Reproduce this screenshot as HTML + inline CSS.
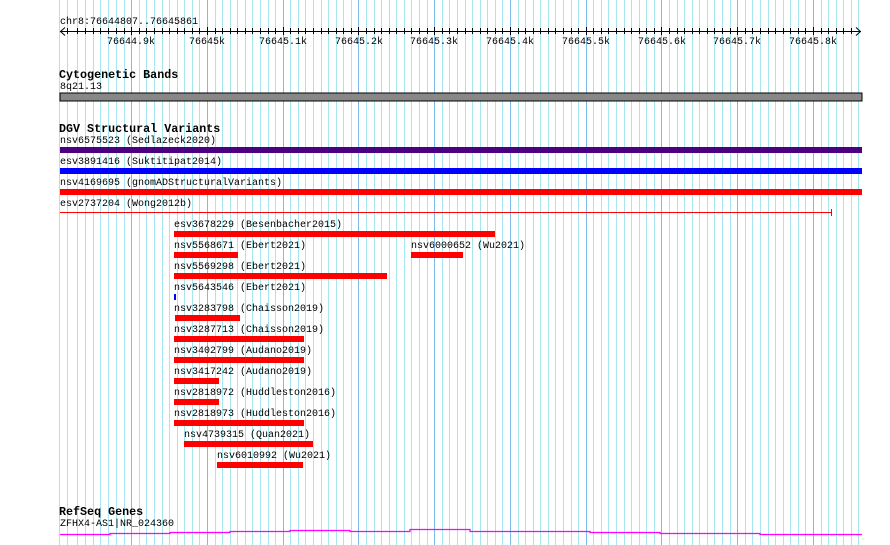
<!DOCTYPE html>
<html><head><meta charset="utf-8"><style>
body{margin:0;width:890px;height:545px;overflow:hidden;background:#fff;position:relative;font-family:"Liberation Mono",monospace;}
.t{position:absolute;font-size:10px;line-height:10px;color:#000;white-space:pre;margin-top:2px;}
.h{position:absolute;font-size:11.7px;line-height:12px;font-weight:bold;color:#000;white-space:pre;margin-top:1px;}
.b{position:absolute;height:6px;background:#f00;}
svg{position:absolute;left:0;top:0;}
</style></head><body>
<svg width="890" height="545">
<line x1="59.5" y1="0" x2="59.5" y2="545" stroke="#a6e6ee"/>
</svg>
<svg width="890" height="545" id="g2">
<g stroke="#a6e6ee" stroke-width="1">
<path d="M67.5 0V545M77.5 0V545M85.5 0V545M93.5 0V545M100.5 0V545M108.5 0V545M116.5 0V545M124.5 0V545"/>
</g>
</svg>
<script>
(function(){
var s=document.getElementById('g2');var ns='http://www.w3.org/2000/svg';
for(var k=0;k<=96;k++){var x=Math.round(131.2+k*7.575)+0.5;if(x>860)break;
var l=document.createElementNS(ns,'line');l.setAttribute('x1',x);l.setAttribute('x2',x);l.setAttribute('y1',0);l.setAttribute('y2',545);
l.setAttribute('stroke',k%10==0?'#7cbce8':'#a6e6ee');s.appendChild(l);
if(x<858){var t=document.createElementNS(ns,'line');t.setAttribute('x1',x);t.setAttribute('x2',x);t.setAttribute('y1',k%10==0?27:28);t.setAttribute('y2',k%10==0?35:34);t.setAttribute('stroke','#000');s.appendChild(t);}
}
var xs=[67.5,77.5,85.5,93.5,100.5,108.5,116.5,124.5];
xs.forEach(function(x){var t=document.createElementNS(ns,'line');t.setAttribute('x1',x);t.setAttribute('x2',x);t.setAttribute('y1',28);t.setAttribute('y2',34);t.setAttribute('stroke','#000');s.appendChild(t);});
})();
</script>
<svg width="890" height="545">
<line x1="60" y1="31.5" x2="861" y2="31.5" stroke="#000"/>
<path d="M65 27.5L60.5 31.5L65 35.5M856 27.5L860.5 31.5L856 35.5" fill="none" stroke="#000"/>
<rect x="60" y="93" width="802" height="8" fill="#888" stroke="#000" stroke-width="1"/>
<line x1="60" y1="212.5" x2="831" y2="212.5" stroke="#f00"/>
<line x1="831.5" y1="209" x2="831.5" y2="216" stroke="#f00"/>
<polyline points="60,534.5 110,534.5 110,533.5 170,533.5 170,532.5 230,532.5 230,531.5 290,531.5 290,530.5 350,530.5 350,531.5 410,531.5 410,529.5 470,529.5 470,531.5 590,531.5 590,532.5 660,532.5 660,533.5 760,533.5 760,534.5 862,534.5" fill="none" stroke="#f0f" stroke-width="1.3"/>
</svg>
<div class="t" style="left:60px;top:16px">chr8:76644807..76645861</div>
<div class="t" style="left:107px;top:36px">76644.9k</div>
<div class="t" style="left:189px;top:36px">76645k</div>
<div class="t" style="left:259px;top:36px">76645.1k</div>
<div class="t" style="left:335px;top:36px">76645.2k</div>
<div class="t" style="left:410px;top:36px">76645.3k</div>
<div class="t" style="left:486px;top:36px">76645.4k</div>
<div class="t" style="left:562px;top:36px">76645.5k</div>
<div class="t" style="left:638px;top:36px">76645.6k</div>
<div class="t" style="left:713px;top:36px">76645.7k</div>
<div class="t" style="left:789px;top:36px">76645.8k</div>
<div class="h" style="left:59px;top:68px">Cytogenetic Bands</div>
<div class="t" style="left:60px;top:81px">8q21.13</div>
<div class="h" style="left:59px;top:122px">DGV Structural Variants</div>
<div class="t" style="left:60px;top:135px">nsv6575523 (Sedlazeck2020)</div>
<div class="b" style="left:60px;top:147px;width:802px;background:#4b0082"></div>
<div class="t" style="left:60px;top:156px">esv3891416 (Suktitipat2014)</div>
<div class="b" style="left:60px;top:168px;width:802px;background:#00f"></div>
<div class="t" style="left:60px;top:177px">nsv4169695 (gnomADStructuralVariants)</div>
<div class="b" style="left:60px;top:189px;width:802px"></div>
<div class="t" style="left:60px;top:198px">esv2737204 (Wong2012b)</div>
<div class="t" style="left:174px;top:219px">esv3678229 (Besenbacher2015)</div>
<div class="b" style="left:174px;top:231px;width:321px"></div>
<div class="t" style="left:174px;top:240px">nsv5568671 (Ebert2021)</div>
<div class="b" style="left:174px;top:252px;width:64px"></div>
<div class="t" style="left:411px;top:240px">nsv6000652 (Wu2021)</div>
<div class="b" style="left:411px;top:252px;width:52px"></div>
<div class="t" style="left:174px;top:261px">nsv5569298 (Ebert2021)</div>
<div class="b" style="left:174px;top:273px;width:213px"></div>
<div class="t" style="left:174px;top:282px">nsv5643546 (Ebert2021)</div>
<div class="b" style="left:174px;top:294px;width:2px;background:#00f"></div>
<div class="t" style="left:174px;top:303px">nsv3283798 (Chaisson2019)</div>
<div class="b" style="left:175px;top:315px;width:65px"></div>
<div class="t" style="left:174px;top:324px">nsv3287713 (Chaisson2019)</div>
<div class="b" style="left:174px;top:336px;width:130px"></div>
<div class="t" style="left:174px;top:345px">nsv3402799 (Audano2019)</div>
<div class="b" style="left:174px;top:357px;width:130px"></div>
<div class="t" style="left:174px;top:366px">nsv3417242 (Audano2019)</div>
<div class="b" style="left:174px;top:378px;width:45px"></div>
<div class="t" style="left:174px;top:387px">nsv2818972 (Huddleston2016)</div>
<div class="b" style="left:174px;top:399px;width:45px"></div>
<div class="t" style="left:174px;top:408px">nsv2818973 (Huddleston2016)</div>
<div class="b" style="left:174px;top:420px;width:130px"></div>
<div class="t" style="left:184px;top:429px">nsv4739315 (Quan2021)</div>
<div class="b" style="left:184px;top:441px;width:129px"></div>
<div class="t" style="left:217px;top:450px">nsv6010992 (Wu2021)</div>
<div class="b" style="left:217px;top:462px;width:86px"></div>
<div class="h" style="left:59px;top:505px">RefSeq Genes</div>
<div class="t" style="left:60px;top:518px">ZFHX4-AS1|NR_024360</div>
</body></html>
